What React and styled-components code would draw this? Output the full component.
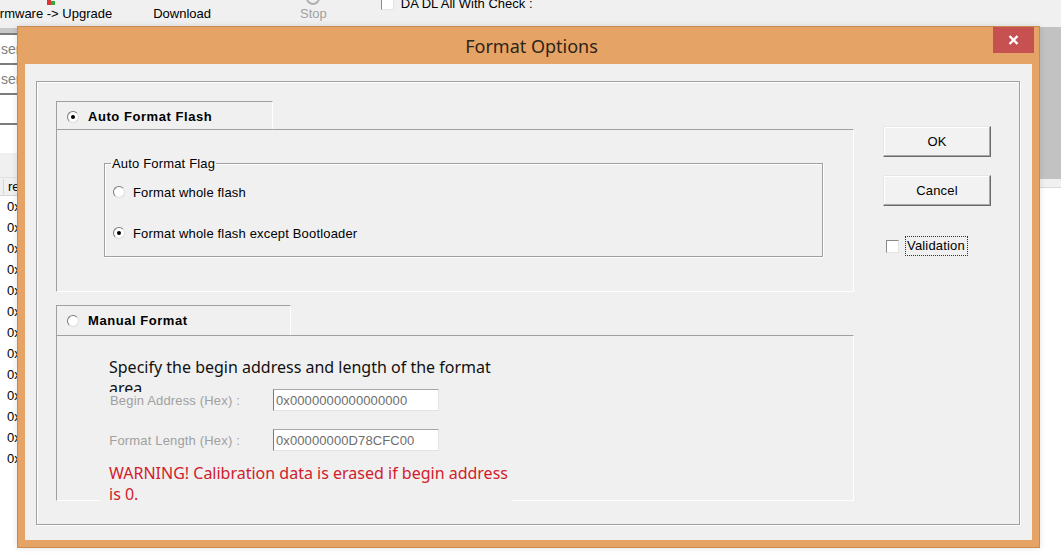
import styled, { createGlobalStyle } from "styled-components";

const GlobalStyle = createGlobalStyle`
  html, body {
    margin: 0;
    padding: 0;
  }
  body {
    background: #f0f0f0;
    font-family: "Liberation Sans", Arial, sans-serif;
    font-size: 13px;
    color: #000;
    overflow: hidden;
  }
`;

const Page = styled.div`
  position: relative;
  width: 1061px;
  height: 558px;
  overflow: hidden;
  display: flex;
  flex-direction: column;
  background: #f0f0f0;
`;

/* ---------- background application window ---------- */

const Toolbar = styled.div`
  height: 26px;
  display: flex;
  align-items: flex-start;
  flex-shrink: 0;
  overflow: hidden;
`;

const ToolButton = styled.div`
  display: flex;
  flex-direction: column;
  align-items: center;
  margin-left: ${(p) => p.$ml}px;
  color: ${(p) => (p.$disabled ? "#a0a0a0" : "#000")};
  white-space: nowrap;
  line-height: 15px;
`;

const ToolIcon = styled.div`
  width: 16px;
  height: 16px;
  margin-top: -10px;
  display: flex;
  justify-content: center;
`;

const DaCheck = styled.label`
  display: flex;
  align-items: center;
  gap: 7px;
  margin-left: ${(p) => p.$ml}px;
  margin-top: -4px;
  white-space: nowrap;
`;

const Box = styled.span`
  width: 13px;
  height: 13px;
  box-sizing: border-box;
  background: #fff;
  border: 1px solid;
  border-color: #8a8a8a #e3e3e3 #e3e3e3 #8a8a8a;
  display: inline-block;
  flex-shrink: 0;
`;

const Workspace = styled.div`
  flex: 1;
  display: flex;
`;

const LeftPanel = styled.div`
  flex: 1;
  display: flex;
  flex-direction: column;
`;

const Band = styled.div`
  width: 300px;
  height: 5px;
  margin-top: 2px;
  background: #c8c8c8;
`;

const FieldStack = styled.div`
  width: 300px;
  display: flex;
  flex-direction: column;
`;

const Field = styled.div`
  height: 30px;
  box-sizing: border-box;
  border-top: 2px solid #7c7c7c;
  background: #fff;
  color: #808080;
  display: flex;
  align-items: center;
  padding-left: 1px;
  font-size: 14px;
`;

const List = styled.div`
  margin-top: 24px;
  flex: 1;
  background: #fff;
  display: flex;
  flex-direction: column;
`;

const ListHead = styled.div`
  height: 19px;
  box-sizing: border-box;
  background: #f0f0f0;
  border-top: 1px solid #e0e0e0;
  border-bottom: 1px solid #d5d5d5;
  display: flex;
  align-items: center;
  padding-left: 3px;
  gap: 4px;

  &::before {
    content: "";
    width: 1px;
    height: 15px;
    background: #d5d5d5;
  }
`;

const ListRow = styled.div`
  height: 21px;
  display: flex;
  align-items: center;
  padding-left: 7px;
`;

const RightPanel = styled.div`
  width: 21px;
  display: flex;
  flex-direction: column;
`;

const GrayArea = styled.div`
  height: 152px;
  margin-top: 1px;
  background: #c2c2c2;
`;

const WhiteArea = styled.div`
  flex: 1;
  margin-top: 8px;
  background: #fff;
  border-top: 1px solid #d9d9d9;
`;

/* ---------- dialog ---------- */

const Dialog = styled.div`
  position: absolute;
  left: 17px;
  top: 26px;
  width: 1023px;
  height: 522px;
  box-sizing: border-box;
  background: #e6a366;
  border: 1px solid #c98a52;
  padding: 0 7px 7px 7px;
  display: flex;
  flex-direction: column;
  box-shadow: 0 0 6px rgba(0, 0, 0, 0.12);
`;

const TitleBar = styled.div`
  height: 37px;
  margin: 0 -7px;
  display: grid;
  grid-template-columns: 1fr auto 1fr;
  align-items: center;
`;

const Title = styled.div`
  grid-column: 2;
  padding-left: 6px;
  font-family: "Noto Sans", "Open Sans", sans-serif;
  font-size: 18px;
  color: #2e2418;
`;

const CloseButton = styled.div`
  grid-column: 3;
  justify-self: end;
  align-self: start;
  margin-right: 5px;
  width: 41px;
  height: 26px;
  background: #c75050;
  display: flex;
  align-items: center;
  justify-content: center;
`;

const Client = styled.div`
  flex: 1;
  background: #f0f0f0;
  padding: 17px 12px 15px 11px;
  display: flex;
  letter-spacing: 0.17px;
`;

const Frame = styled.div`
  flex: 1;
  border: 1px solid #a0a0a0;
  box-shadow: 1px 1px 0 #fff, inset 1px 1px 0 #fff;
  padding: 19px 0 0 19px;
  display: flex;
  align-items: flex-start;
`;

const Sections = styled.div`
  width: 798px;
  display: flex;
  flex-direction: column;
  gap: 13px;
`;

const Section = styled.div`
  display: flex;
  flex-direction: column;
`;

const SectionHead = styled.div`
  width: ${(p) => p.$w}px;
  height: ${(p) => p.$h}px;
  box-sizing: border-box;
  border-top: 1px solid #a0a0a0;
  border-left: 1px solid #a0a0a0;
  border-right: 1px solid #fff;
  display: flex;
  align-items: center;
  gap: 9px;
  padding: ${(p) => p.$pt || 0}px 0 0 10px;
  font-weight: bold;
  font-size: 13px;
  letter-spacing: 0.55px;
`;

const SectionBody = styled.div`
  height: ${(p) => p.$h}px;
  box-sizing: border-box;
  border: 1px solid;
  border-color: #a0a0a0 #fff #fff #a0a0a0;
  padding: ${(p) => p.$pad};
`;

const Radio = styled.span`
  width: 12px;
  height: 12px;
  box-sizing: border-box;
  border-radius: 50%;
  border: 1px solid;
  border-color: #7a7a7a #dcdcdc #dcdcdc #7a7a7a;
  background: #fff;
  display: inline-flex;
  align-items: center;
  justify-content: center;
  flex-shrink: 0;

  &::after {
    content: "";
    width: 4px;
    height: 4px;
    border-radius: 50%;
    background: ${(p) => (p.$checked ? "#000" : "transparent")};
  }
`;

const FlagGroup = styled.fieldset`
  margin: 0 0 0 47px;
  width: 719px;
  height: 101px;
  box-sizing: border-box;
  border: 1px solid #a0a0a0;
  box-shadow: 1px 1px 0 #fff, inset 1px 1px 0 #fff;
  padding: 12px 0 0 8px;
  display: flex;
  flex-direction: column;
  gap: 23px;
  min-width: 0;
`;

const Legend = styled.legend`
  margin-left: -2px;
  padding: 0 1px;
  line-height: 15px;
`;

const RadioRow = styled.label`
  height: 18px;
  display: flex;
  align-items: center;
  gap: 8px;
`;

const Specify = styled.div`
  width: 390px;
  height: 35px;
  overflow: hidden;
  font-family: "Noto Sans", "Open Sans", sans-serif;
  font-size: 16px;
  line-height: 21px;
  letter-spacing: 0;
  color: #111;
`;

const FieldRow = styled.div`
  display: grid;
  grid-template-columns: 136px 166px;
  column-gap: 33px;
  align-items: center;
  margin: ${(p) => p.$mt}px 0 0 -5px;
`;

const FieldLabel = styled.span`
  text-align: right;
  color: #a0a0a0;
  white-space: nowrap;
`;

const HexInput = styled.input`
  width: 166px;
  height: 22px;
  box-sizing: border-box;
  margin: 0;
  padding: 0 2px;
  border: 1px solid;
  border-color: #a8a8a8 #e3e3e3 #e3e3e3 #7a7a7a;
  background: #fff;
  font-family: "Liberation Sans", Arial, sans-serif;
  font-size: 13px;
  letter-spacing: 0.1px;
  color: #6d6d6d;
  outline: none;
`;

const Warning = styled.div`
  margin: 12px 0 0 -9px;
  padding-left: 9px;
  width: 403px;
  background: #f0f0f0;
  font-family: "Noto Sans", "Open Sans", sans-serif;
  font-size: 16px;
  line-height: 21px;
  letter-spacing: 0;
  color: #d0202c;
`;

const Side = styled.div`
  margin: 25px 0 0 29px;
  display: flex;
  flex-direction: column;
`;

const Button = styled.div`
  width: 108px;
  height: 31px;
  box-sizing: border-box;
  background: #f2f2f2;
  border: 1px solid;
  border-color: #e6e6e6 #6b6b6b #6b6b6b #e6e6e6;
  box-shadow: inset -1px -1px 0 #a8a8a8, inset 1px 1px 0 #fff;
  display: flex;
  align-items: center;
  justify-content: center;
  margin-bottom: 18px;
`;

const CheckRow = styled.label`
  display: flex;
  align-items: center;
  gap: 6px;
  margin: 12px 0 0 3px;
`;

const FocusText = styled.span`
  border: 1px dotted #333;
  padding: 2px 2px 2px 1px;
  line-height: 14px;
`;

const rows = Array.from({ length: 13 }, (_, i) => i);

export default function App() {
  return (
    <>
      <GlobalStyle />
      <Page>
        <Toolbar>
          <ToolButton $ml={-11}>
            <ToolIcon>
              <svg width="10" height="16" viewBox="0 0 10 16">
                <rect x="1" y="10" width="4" height="5" fill="#d33" />
                <rect x="5" y="11" width="4" height="4" fill="#3a3" />
              </svg>
            </ToolIcon>
            Firmware -&gt; Upgrade
          </ToolButton>
          <ToolButton $ml={41}>
            <ToolIcon />
            Download
          </ToolButton>
          <ToolButton $ml={89} $disabled>
            <ToolIcon>
              <svg width="16" height="16" viewBox="0 0 16 16">
                <circle cx="8" cy="8" r="6" fill="none" stroke="#b0b0b0" strokeWidth="2" />
              </svg>
            </ToolIcon>
            Stop
          </ToolButton>
          <DaCheck $ml={54}>
            <Box />
            DA DL All With Check :
          </DaCheck>
        </Toolbar>

        <Workspace>
          <LeftPanel>
            <Band />
            <FieldStack>
              <Field>ser</Field>
              <Field>ser</Field>
              <Field />
              <Field />
            </FieldStack>
            <List>
              <ListHead>re</ListHead>
              {rows.map((i) => (
                <ListRow key={i}>0x0000000000000000</ListRow>
              ))}
            </List>
          </LeftPanel>
          <RightPanel>
            <GrayArea />
            <WhiteArea />
          </RightPanel>
        </Workspace>

        <Dialog>
          <TitleBar>
            <Title>Format Options</Title>
            <CloseButton>
              <svg width="11" height="10" viewBox="0 0 11 10">
                <path d="M1.5 1 L9.5 9 M9.5 1 L1.5 9" stroke="#fff" strokeWidth="2.3" />
              </svg>
            </CloseButton>
          </TitleBar>
          <Client>
            <Frame>
              <Sections>
                <Section>
                  <SectionHead $w={217} $h={28} $pt={2}>
                    <Radio $checked />
                    Auto Format Flash
                  </SectionHead>
                  <SectionBody $h={163} $pad="26px 0 0 0">
                    <FlagGroup>
                      <Legend>Auto Format Flag</Legend>
                      <RadioRow>
                        <Radio />
                        Format whole flash
                      </RadioRow>
                      <RadioRow>
                        <Radio $checked />
                        Format whole flash except Bootloader
                      </RadioRow>
                    </FlagGroup>
                  </SectionBody>
                </Section>
                <Section>
                  <SectionHead $w={235} $h={30}>
                    <Radio />
                    Manual Format
                  </SectionHead>
                  <SectionBody $h={166} $pad="21px 0 0 52px">
                    <Specify>Specify the begin address and length of the format area</Specify>
                    <FieldRow $mt={-3}>
                      <FieldLabel>Begin Address (Hex) :</FieldLabel>
                      <HexInput readOnly defaultValue="0x0000000000000000" />
                    </FieldRow>
                    <FieldRow $mt={18}>
                      <FieldLabel>Format Length (Hex) :</FieldLabel>
                      <HexInput readOnly defaultValue="0x00000000D78CFC00" />
                    </FieldRow>
                    <Warning>WARNING! Calibration data is erased if begin address is 0.</Warning>
                  </SectionBody>
                </Section>
              </Sections>
              <Side>
                <Button>OK</Button>
                <Button>Cancel</Button>
                <CheckRow>
                  <Box />
                  <FocusText>Validation</FocusText>
                </CheckRow>
              </Side>
            </Frame>
          </Client>
        </Dialog>
      </Page>
    </>
  );
}
